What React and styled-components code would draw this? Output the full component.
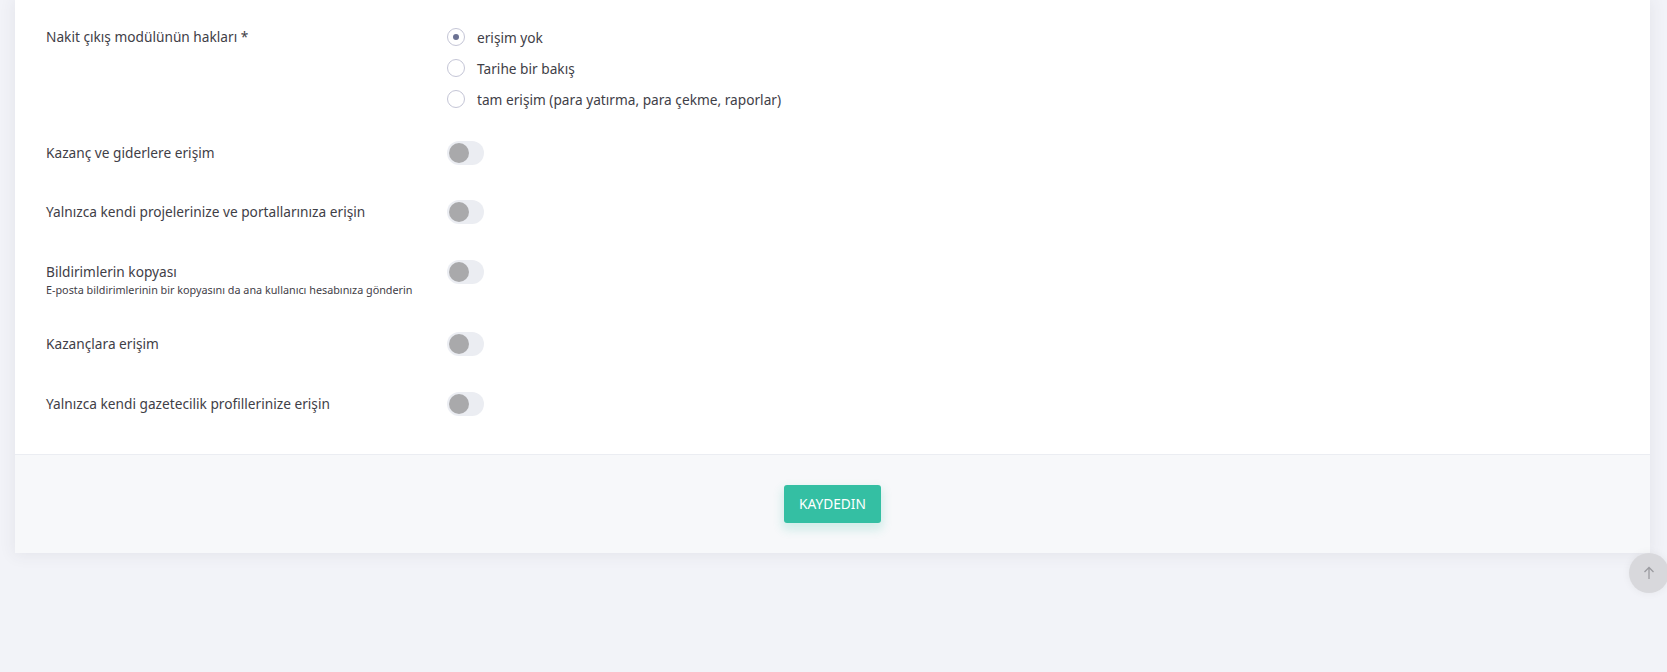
import React, { useState } from "react";
import styled, { createGlobalStyle } from "styled-components";

const GlobalStyle = createGlobalStyle`
  html, body { margin: 0; padding: 0; }
  body {
    background: #f2f3f8;
    font-family: "Noto Sans", "Open Sans", sans-serif;
    color: #575962;
    min-height: 672px;
  }
`;

const Page = styled.div`
  padding: 0 17px 0 15px;
`;

const Card = styled.div`
  background: #fff;
  box-shadow: 0 1px 15px 1px rgba(69, 65, 78, 0.08);
`;

const Body = styled.div`
  padding: 27px 31px 38px;
  display: flex;
  flex-direction: column;
  gap: 35.5px;
`;

const Row = styled.div`
  display: grid;
  grid-template-columns: 401px 1fr;
  align-items: start;
  margin-top: ${(p) => (p.$after ? "-5px" : "0")};
`;

const LabelBlock = styled.div`
  display: flex;
  flex-direction: column;
`;

const Label = styled.div`
  font-size: 13.7px;
  line-height: ${(p) => p.$lh || "24px"};
  color: #3f4047;
`;

const Hint = styled.div`
  font-size: 10.8px;
  line-height: 14px;
  color: #3f4047;
  margin-top: -1px;
`;

const RadioList = styled.div`
  display: flex;
  flex-direction: column;
  gap: 9px;
  margin-top: -1px;
`;

const RadioItem = styled.label`
  display: flex;
  align-items: center;
  gap: 12px;
  height: 22px;
  font-size: 13.7px;
  color: #3f4047;
  cursor: pointer;
`;

const RadioCircle = styled.span`
  width: 16px;
  height: 16px;
  border-radius: 50%;
  border: 1px solid #c4c5d6;
  background: #fff;
  display: flex;
  align-items: center;
  justify-content: center;
  flex-shrink: 0;
  &::after {
    content: "";
    width: 6px;
    height: 6px;
    border-radius: 50%;
    background: ${(p) => (p.$checked ? "#6c7293" : "transparent")};
  }
`;

const ControlCell = styled.div`
  display: flex;
`;

const Toggle = styled.span`
  display: flex;
  align-items: center;
  width: 37px;
  height: 24px;
  border-radius: 12px;
  background: #ebedf2;
  padding: 0 2px;
  box-sizing: border-box;
  cursor: pointer;
  &::after {
    content: "";
    width: 20px;
    height: 20px;
    border-radius: 50%;
    background: #a9a9ab;
  }
`;

const Footer = styled.div`
  border-top: 1px solid #ebedf2;
  background: #f7f8fa;
  padding: 30px 0;
  display: flex;
  justify-content: center;
`;

const SaveButton = styled.button`
  height: 38px;
  padding: 0 15px;
  border: none;
  border-radius: 3px;
  background: #34bfa3;
  color: #fff;
  font-family: "Noto Sans", "Open Sans", sans-serif;
  font-size: 13.7px;
  text-transform: uppercase;
  box-shadow: 0 5px 10px 2px rgba(52, 191, 163, 0.19);
  cursor: pointer;
`;

const ScrollTop = styled.div`
  position: fixed;
  right: -2px;
  top: 553px;
  width: 40px;
  height: 40px;
  border-radius: 50%;
  background: #d8d8dc;
  box-shadow: 0 0 8px rgba(0, 0, 0, 0.06);
  display: flex;
  align-items: center;
  justify-content: center;
  color: #9b9ba0;
`;

const radios = [
  "erişim yok",
  "Tarihe bir bakış",
  "tam erişim (para yatırma, para çekme, raporlar)",
];

const toggles = [
  { label: "Kazanç ve giderlere erişim" },
  { label: "Yalnızca kendi projelerinize ve portallarınıza erişin" },
  {
    label: "Bildirimlerin kopyası",
    hint: "E-posta bildirimlerinin bir kopyasını da ana kullanıcı hesabınıza gönderin",
  },
  { label: "Kazançlara erişim" },
  { label: "Yalnızca kendi gazetecilik profillerinize erişin" },
];

export default function App() {
  const [selected, setSelected] = useState(0);
  return (
    <>
      <GlobalStyle />
      <Page>
        <Card>
          <Body>
            <Row>
              <Label $lh="20px">Nakit çıkış modülünün hakları *</Label>
              <RadioList>
                {radios.map((r, i) => (
                  <RadioItem key={r} onClick={() => setSelected(i)}>
                    <RadioCircle $checked={selected === i} />
                    {r}
                  </RadioItem>
                ))}
              </RadioList>
            </Row>
            {toggles.map((t, i) => (
              <Row key={t.label} $after={i === 0}>
                <LabelBlock>
                  <Label>{t.label}</Label>
                  {t.hint && <Hint>{t.hint}</Hint>}
                </LabelBlock>
                <ControlCell>
                  <Toggle />
                </ControlCell>
              </Row>
            ))}
          </Body>
          <Footer>
            <SaveButton>Kaydedin</SaveButton>
          </Footer>
        </Card>
      </Page>
      <ScrollTop>
        <svg width="14" height="14" viewBox="0 0 14 14" fill="none" stroke="currentColor" strokeWidth="1.3">
          <path d="M7 13V1.5M2.5 6L7 1.5 11.5 6" />
        </svg>
      </ScrollTop>
    </>
  );
}
